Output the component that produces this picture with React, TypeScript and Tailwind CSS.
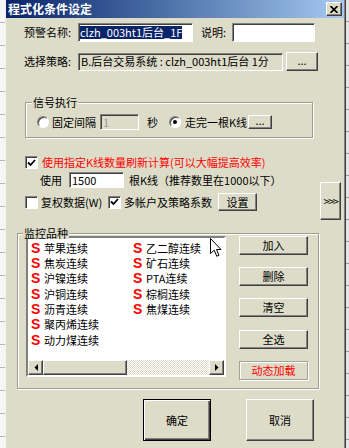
import React from "react";

const listItems = [
  "苹果连续",
  "焦炭连续",
  "沪镍连续",
  "沪铜连续",
  "沥青连续",
  "聚丙烯连续",
  "动力煤连续",
  "乙二醇连续",
  "矿石连续",
  "PTA连续",
  "棕榈连续",
  "焦煤连续",
];

const raised =
  "border border-t-white border-l-white border-b-[#404040] border-r-[#404040] shadow-[inset_-1px_-1px_0_#808080] bg-[#dddcc9]";
const sunken =
  "border border-t-[#808080] border-l-[#808080] border-b-white border-r-white shadow-[inset_1px_1px_0_#404040]";

function Button({ className = "", children }: { className?: string; children?: React.ReactNode }) {
  return <div className={`${raised} flex items-center justify-center leading-[13px] ${className}`}>{children}</div>;
}

function Checkbox({ checked }: { checked?: boolean }) {
  return (
    <div className={`${sunken} flex h-[13px] w-[13px] shrink-0 items-center justify-center bg-white`}>
      {checked && (
        <svg width="9" height="8" viewBox="0 0 9 8">
          <polyline points="1,3.5 3.5,6 8,1" fill="none" stroke="#000" strokeWidth="1.8" />
        </svg>
      )}
    </div>
  );
}

function Radio({ checked }: { checked?: boolean }) {
  return (
    <div className="flex h-[12px] w-[12px] shrink-0 items-center justify-center rounded-full border border-t-[#808080] border-l-[#808080] border-b-white border-r-white bg-white shadow-[inset_1px_1px_0_#404040]">
      {checked && <div className="h-[4px] w-[4px] rounded-full bg-black" />}
    </div>
  );
}

function Arrow({ dir }: { dir: "left" | "right" }) {
  return (
    <div className={`${raised} flex h-[15px] w-[15px] shrink-0 items-center justify-center`}>
      <svg width="4" height="7" viewBox="0 0 4 7">
        <polygon points={dir === "left" ? "4,0 4,7 0.5,3.5" : "0,0 0,7 3.5,3.5"} fill="#000" />
      </svg>
    </div>
  );
}

export default function App() {
  return (
    <div className="relative flex h-[448px] w-[349px] overflow-hidden bg-[#dddcc9] font-['Noto_Sans_CJK_SC','Noto_Sans',sans-serif] text-[11px] text-black">
      {/* window behind, left */}
      <div className="h-full w-[5px] shrink-0 bg-[repeating-linear-gradient(to_bottom,#f6f6f6_0_22px,#b8b8b8_22px_23px)]" />

      {/* dialog */}
      <div className="flex w-[341px] shrink-0 flex-col bg-[#dddcc9] shadow-[inset_1px_0_0_#f4f3ea,inset_-1px_0_0_#404040,inset_-2px_0_0_#808080]">
        <div className="ml-[1px] mr-[2px] flex h-[18px] items-center justify-between bg-linear-to-r from-[#0a246a] to-[#a6caf0] pl-[2px] pr-[2px]">
          <span className="text-[12px] font-bold leading-[14px] text-white">程式化条件设定</span>
          <div className={`${raised} flex h-[14px] w-[16px] items-center justify-center`}>
            <svg width="8" height="7" viewBox="0 0 8 7">
              <path d="M0.5 0 L7.5 7 M7.5 0 L0.5 7" stroke="#000" strokeWidth="1.6" />
            </svg>
          </div>
        </div>

        <div className="flex">
          <div className="flex w-[315px] flex-col">
            {/* name row */}
            <div className="mt-[5px] flex h-[19px] items-center">
              <span className="ml-[19px] w-[54px]">预警名称:</span>
              <div className={`${sunken} flex h-[19px] w-[115px] items-center overflow-hidden bg-white pl-[1px]`}>
                <span className="whitespace-nowrap bg-[#0a246a] leading-[13px] text-white">clzh_003ht1后台_1F</span>
              </div>
              <span className="ml-[8px] w-[31px]">说明:</span>
              <div className={`${sunken} h-[19px] w-[83px] bg-white`} />
            </div>

            {/* strategy row */}
            <div className="mt-[10px] flex h-[19px] items-center">
              <span className="ml-[19px] w-[54px]">选择策略:</span>
              <div className={`${sunken} flex h-[18px] w-[205px] items-center overflow-hidden pl-[2px]`}>
                <span className="whitespace-pre">B.后台交易系统 : clzh_003ht1后台 1分</span>
              </div>
              <Button className="ml-[3px] h-[19px] w-[32px] pb-[3px]">...</Button>
            </div>

            {/* signal group */}
            <div className="relative ml-[20px] mt-[31px] w-[288px] border border-[#9d9c90] pb-[7px] pl-[11px] pt-[11px] shadow-[1px_1px_0_#fff,inset_1px_1px_0_#fff]">
              <span className="absolute left-[6px] top-[-7px] bg-[#dddcc9] px-[1px] leading-[12px]">信号执行</span>
              <div className="flex h-[16px] items-center">
                <Radio />
                <span className="ml-[3px] w-[44px] whitespace-nowrap">固定间隔</span>
                <div className={`${sunken} ml-[4px] flex h-[16px] w-[39px] items-center pl-[2px] text-[#9a9a9a]`}>1</div>
                <span className="ml-[8px] w-[11px]">秒</span>
                <div className="ml-[11px]">
                  <Radio checked />
                </div>
                <span className="ml-[4px] w-[60px] whitespace-nowrap">走完一根K线</span>
                <Button className="ml-[3px] h-[14px] w-[24px] pb-[3px]">...</Button>
              </div>
            </div>

            {/* refresh row */}
            <div className="mt-[18px] flex h-[13px] items-center">
              <div className="ml-[20px]">
                <Checkbox checked />
              </div>
              <span className="ml-[4px] whitespace-nowrap leading-[13px] text-[#ff0000]">
                使用指定K线数量刷新计算(可以大幅提高效率)
              </span>
            </div>

            <div className="mt-[3px] flex h-[16px] items-center">
              <span className="ml-[35px] w-[29px]">使用</span>
              <div className={`${sunken} flex h-[16px] w-[55px] items-center bg-white pl-[2px]`}>1500</div>
              <span className="ml-[5px] whitespace-nowrap">根K线（推荐数里在1000以下）</span>
            </div>

            <div className="mt-[5px] flex h-[18px] items-center">
              <div className="ml-[20px]">
                <Checkbox />
              </div>
              <span className="ml-[3px] w-[64px] whitespace-nowrap">复权数据(W)</span>
              <div className="ml-[3px]">
                <Checkbox checked />
              </div>
              <span className="ml-[3px] w-[88px] whitespace-nowrap">多帐户及策略系数</span>
              <Button className="ml-[6px] h-[18px] w-[39px]">设置</Button>
            </div>

            {/* monitor group */}
            <div className="relative ml-[12px] mt-[22px] flex w-[302px] border border-[#9d9c90] pb-[8px] pl-[8px] pt-[2px] shadow-[1px_1px_0_#fff,inset_1px_1px_0_#fff]">
              <span className="absolute left-[5px] top-[-7px] bg-[#dddcc9] px-[1px] leading-[12px]">监控品种</span>
              <div className="flex h-[141px] w-[200px] flex-col border-2 border-t-[#808080] border-l-[#808080] border-b-white border-r-white bg-white">
                <div className="grid flex-1 grid-flow-col grid-cols-[102px_1fr] grid-rows-[repeat(7,15.33px)] pl-[3px] pt-[2px]">
                  {listItems.map((name) => (
                    <div key={name} className="flex items-center whitespace-nowrap">
                      <span className="w-[13px] font-['Liberation_Sans',sans-serif] text-[14px] font-bold leading-[14px] text-[#ff0000]">S</span>
                      <span className="leading-[14px]">{name}</span>
                    </div>
                  ))}
                </div>
                <div className="flex h-[15px] bg-[repeating-conic-gradient(#dddcc9_0_25%,#ffffff_0_50%)] bg-[length:2px_2px]">
                  <Arrow dir="left" />
                  <div className={`${raised} h-[15px] w-[84px]`} />
                  <div className="flex-1" />
                  <Arrow dir="right" />
                </div>
              </div>
              <div className="ml-[13px] flex w-[69px] flex-col">
                <Button className="h-[19px]">加入</Button>
                <Button className="mt-[12px] h-[19px]">删除</Button>
                <Button className="mt-[12px] h-[19px]">清空</Button>
                <Button className="mt-[13px] h-[19px]">全选</Button>
                <div className="mt-[12px] flex h-[19px] items-center justify-center border border-[#a3a296] leading-[13px] text-[#ff0000] shadow-[inset_1px_1px_0_#fff,1px_1px_0_#fff]">
                  动态加载
                </div>
              </div>
            </div>

            {/* dialog buttons */}
            <div className="mt-[10px] flex">
              <div className="ml-[138px] flex h-[42px] w-[68px] items-center justify-center border border-black bg-[#dddcc9] shadow-[inset_1px_1px_0_#fff,inset_-1px_-1px_0_#404040,inset_-2px_-2px_0_#808080]">
                确定
              </div>
              <Button className="ml-[35px] h-[42px] w-[68px]">取消</Button>
            </div>
          </div>

          <div className="flex flex-col">
            <Button className="mt-[164px] h-[38px] w-[21px] text-[11px] tracking-[-1.5px]">&gt;&gt;&gt;</Button>
          </div>
        </div>
      </div>

      {/* window behind, right */}
      <div className="h-full w-[3px] shrink-0 bg-[repeating-linear-gradient(to_bottom,#e4e4e4_0_21px,#9a9a9a_21px_22px)]" />

      {/* mouse pointer */}
      <svg className="absolute left-[210px] top-[238px]" width="12" height="20" viewBox="0 0 12 20">
        <path d="M0.5 0.5 L0.5 15.5 L4.2 12.2 L6.8 18.3 L9 17.3 L6.5 11.5 L11 11.5 Z" fill="#fff" stroke="#000" strokeWidth="1" />
      </svg>
    </div>
  );
}
